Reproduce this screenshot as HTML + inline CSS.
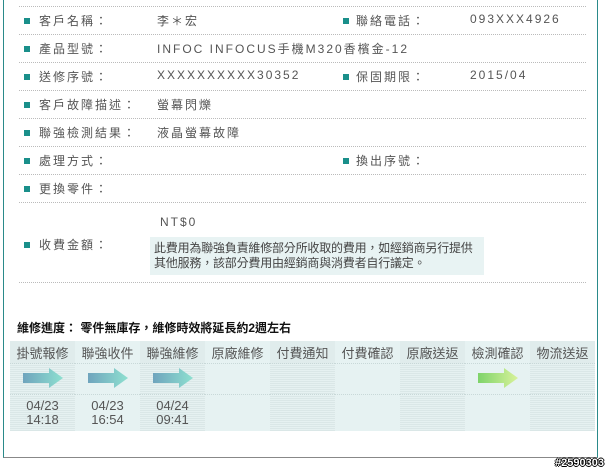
<!DOCTYPE html>
<html><head><meta charset="utf-8"><style>
body{margin:0;width:606px;height:471px;background:#fff;font-family:"Liberation Sans","Noto Sans CJK TC",sans-serif;font-size:12px;color:#555;position:relative;overflow:hidden}
.frame{position:absolute;left:3px;top:0;width:593px;height:457px;border-left:1px solid #2a8a8a;border-right:1px solid #2a8a8a;border-bottom:1px solid #888}
.hr{position:absolute;left:19px;width:567px;border-top:1px dotted #bbb}
.t{position:absolute;white-space:nowrap;letter-spacing:2px}
.b{position:absolute;width:6px;height:6px;background:#1a8f8a}
.box{position:absolute;left:150px;top:237px;width:334px;height:38px;background:#e8f3f3;color:#444;line-height:15px;padding:4px 0 0 4px;box-sizing:border-box;font-size:12px;white-space:nowrap;letter-spacing:-0.2px}
.title{position:absolute;left:17px;top:319px;font-weight:bold;color:#111;font-size:12px}
table{position:absolute;left:10px;top:341px;border-collapse:collapse;width:585px;table-layout:fixed}
td{padding:0;text-align:center;vertical-align:middle;color:#555;font-size:12px}
td.p{background-color:#e6f1f1;background-image:radial-gradient(#cfdede 0.6px,transparent 0.8px);background-size:2px 2px}
td.q{background:#e6f2f2}
tr.h td{height:22px;border-bottom:1px dotted #c8d8d8;font-size:13px}
tr.a td{height:30px;border-bottom:1px dotted #c8d8d8}
tr.d td{height:36px;line-height:14px;font-size:13px}
.wm{position:absolute;right:2px;top:457px;font-weight:bold;color:#fff;font-size:11px;text-shadow:1px 0 #000,-1px 0 #000,0 1px #000,0 -1px #000}
</style></head><body>
<div class="frame"></div>
<div class="hr" style="top:6px"></div>
<div class="hr" style="top:34px"></div>
<div class="hr" style="top:62px"></div>
<div class="hr" style="top:90px"></div>
<div class="hr" style="top:118px"></div>
<div class="hr" style="top:146px"></div>
<div class="hr" style="top:174px"></div>
<div class="hr" style="top:202px"></div>
<div class="hr" style="top:282px"></div>

<div class="b" style="left:24px;top:18px"></div><div class="t" style="left:39px;top:12px">客戶名稱：</div><div class="t" style="left:157px;top:12px">李＊宏</div>
<div class="b" style="left:343px;top:18px"></div><div class="t" style="left:356px;top:12px">聯絡電話：</div><div class="t" style="left:470px;top:12px">093XXX4926</div>
<div class="b" style="left:24px;top:46px"></div><div class="t" style="left:39px;top:40px">產品型號：</div><div class="t" style="left:157px;top:40px">INFOC INFOCUS手機M320香檳金-12</div>
<div class="b" style="left:24px;top:74px"></div><div class="t" style="left:39px;top:68px">送修序號：</div><div class="t" style="left:157px;top:68px">XXXXXXXXXX30352</div>
<div class="b" style="left:343px;top:74px"></div><div class="t" style="left:356px;top:68px">保固期限：</div><div class="t" style="left:470px;top:68px">2015/04</div>
<div class="b" style="left:24px;top:102px"></div><div class="t" style="left:39px;top:96px">客戶故障描述：</div><div class="t" style="left:157px;top:96px">螢幕閃爍</div>
<div class="b" style="left:24px;top:130px"></div><div class="t" style="left:39px;top:124px">聯強檢測結果：</div><div class="t" style="left:157px;top:124px">液晶螢幕故障</div>
<div class="b" style="left:24px;top:158px"></div><div class="t" style="left:39px;top:152px">處理方式：</div>
<div class="b" style="left:343px;top:158px"></div><div class="t" style="left:356px;top:152px">換出序號：</div>
<div class="b" style="left:24px;top:186px"></div><div class="t" style="left:39px;top:180px">更換零件：</div>
<div class="t" style="left:160px;top:215px">NT$0</div>
<div class="b" style="left:24px;top:242px"></div><div class="t" style="left:39px;top:236px">收費金額：</div>
<div class="box">此費用為聯強負責維修部分所收取的費用，如經銷商另行提供<br>其他服務，該部分費用由經銷商與消費者自行議定。</div>

<div class="title">維修進度： 零件無庫存，維修時效將延長約2週左右</div>
<table>
<tr class="h"><td class="p">掛號報修</td><td class="q">聯強收件</td><td class="p">聯強維修</td><td class="q">原廠維修</td><td class="p">付費通知</td><td class="q">付費確認</td><td class="p">原廠送返</td><td class="q">檢測確認</td><td class="p">物流送返</td></tr>
<tr class="a">
<td class="p"><svg width="40" height="20"><defs><linearGradient id="g1"><stop offset="0" stop-color="#6fa4bd"/><stop offset="1" stop-color="#8ee0d0"/></linearGradient></defs><path d="M0 5H26V0L40 10L26 20V15H0Z" fill="url(#g1)"/></svg></td>
<td class="q"><svg width="40" height="20"><path d="M0 5H26V0L40 10L26 20V15H0Z" fill="url(#g1)"/></svg></td>
<td class="p"><svg width="40" height="20"><path d="M0 5H26V0L40 10L26 20V15H0Z" fill="url(#g1)"/></svg></td>
<td class="q"></td><td class="p"></td><td class="q"></td><td class="p"></td>
<td class="q"><svg width="40" height="20"><defs><linearGradient id="g2"><stop offset="0" stop-color="#7ed36a"/><stop offset="1" stop-color="#d8f29a"/></linearGradient></defs><path d="M0 5H26V0L40 10L26 20V15H0Z" fill="url(#g2)"/></svg></td>
<td class="p"></td></tr>
<tr class="d"><td class="p">04/23<br>14:18</td><td class="q">04/23<br>16:54</td><td class="p">04/24<br>09:41</td><td class="q"></td><td class="p"></td><td class="q"></td><td class="p"></td><td class="q"></td><td class="p"></td></tr>
</table>
<div class="wm">#2590303</div>
</body></html>
